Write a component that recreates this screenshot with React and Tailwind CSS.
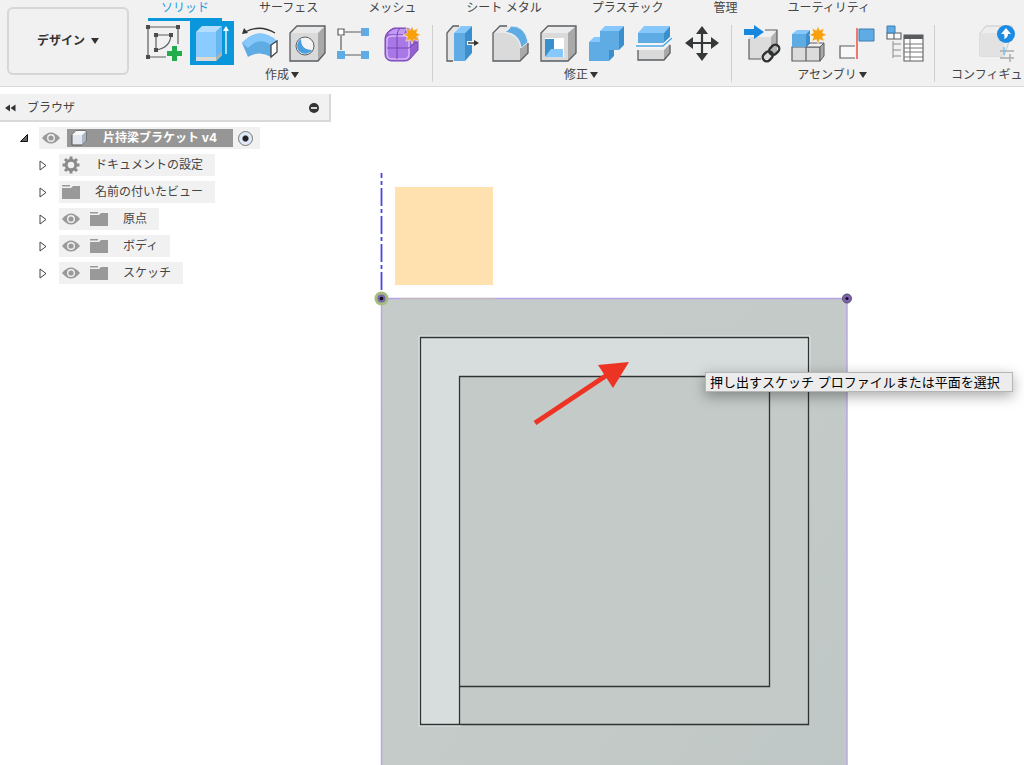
import { useState } from "react";

const TABS = [
  "ソリッド",
  "サーフェス",
  "メッシュ",
  "シート メタル",
  "プラスチック",
  "管理",
  "ユーティリティ",
];

const BLUE = "#5fabe3";
const LIGHT = "#86c8fb";
const DEEP = "#3c8fcd";
const LINE = "#5a5d60";

const Star = () => (
  <path
    d="M30 5l1.7 4.3 4.4-2-1.6 4.5 4.5 2.2-4.5 1.6 1.6 4.7-4.4-1.8L30 23l-1.7-4.5-4.4 1.8 1.6-4.7L21 14l4.5-2.2-1.6-4.5 4.4 2z"
    fill="#f9a10d"
    stroke="#f1f1f1"
    strokeWidth="0.6"
  />
);

const SketchIcon = () => (
  <>
    <path
      d="M6 6h30v17M6 6v30h18M14 29V14h15q-1 13-15 15"
      fill="none"
      stroke={LINE}
      strokeWidth="1.2"
    />
    <path
      d="M4 4h4v4H4zM34 4h4v4h-4zM4 34h4v4H4zM12 12h4v4h-4zM27 12h4v4h-4zM12 27h4v4h-4z"
      fill="#4b4e50"
    />
    <path d="M30 25h5v5h5v5h-5v5h-5v-5h-5v-5h5z" fill="#22ac4b" />
  </>
);

const ExtrudeIcon = () => (
  <>
    <path d="M6 36h20l6-6v4l-6 6H6z" fill="#dcdad6" />
    <path d="M26 36l6-6v4l-6 6z" fill="#b3b1ad" />
    <path d="M6 11h20v25H6z" fill="#8accff" />
    <path d="M6 11l6-6h20l-6 6z" fill="#b4deff" />
    <path d="M26 11l6-6v25l-6 6z" fill="#69b7f0" />
    <path d="M36 33V8" stroke="#fff" strokeWidth="1.3" />
    <path d="M36 5l3 5h-6z" fill="#fff" />
  </>
);

const RevolveIcon = () => (
  <>
    <path
      d="M7 11Q22 3 37 12"
      fill="none"
      stroke="#333"
      strokeWidth="1.3"
    />
    <path d="M4 13l2-6 4 5z" fill="#333" />
    <path d="M4 22Q21 4 39 20l-6 16q-11-7-23 0z" fill={BLUE} />
    <path d="M4 22Q21 4 39 20l-6 4Q21 15 10 27z" fill={LIGHT} />
    <path
      d="M33 24l6-4v11l-6 5z"
      fill="#fff"
      stroke="#444"
      strokeWidth="1.3"
    />
  </>
);

const HoleIcon = () => (
  <>
    <path d="M4 12l7-7h28v27l-7 8H4z" fill="#e9e9e9" />
    <path d="M4 12h28v28H4z" fill="#dadada" />
    <path d="M32 12l7-7v27l-7 8z" fill="#a9a9a9" />
    <path
      d="M4 12l7-7h28v27l-7 8H4z"
      fill="none"
      stroke={LINE}
      strokeWidth="1.3"
    />
    <circle cx="19" cy="25" r="9" fill="#f4f4f4" stroke={LINE} />
    <path d="M15 18a8 8 0 1 0 11 11q-11 0-11-11z" fill="#4a9fde" />
  </>
);

const PatternIcon = () => (
  <>
    <path
      d="M11 11h16M7 15v14M11 34h16"
      stroke={LINE}
      strokeWidth="1.2"
    />
    <path d="M4 8h6v6H4z" fill="#fff" stroke={LINE} strokeWidth="1.2" />
    <path d="M27 7h8v8h-8zM3 30h8v8H3zM27 30h8v8h-8z" fill={BLUE} />
  </>
);

const FormIcon = () => (
  <>
    <path
      d="M12 7h12q9 2 12 12v10l-8 9q-2 2-5 2H9q-6-1-6-7V17q1-7 9-10z"
      fill="#9461cf"
      stroke="#7545b3"
    />
    <path
      d="M5 18q1-3 5-3h13q4 0 4 3v15q0 5-5 5H10q-5 0-5-5z"
      fill="#a978e6"
      stroke="#d6b7fb"
      strokeWidth="1.6"
    />
    <path d="M6 13q4-5 9-5h9l-2 5z" fill="#c39af3" />
    <path
      d="M15 15v23M5 27h22M15 15q0-5 3-8M27 27l8-6"
      fill="none"
      stroke="#7545b3"
    />
    <Star />
  </>
);

const PressPullIcon = () => (
  <>
    <path d="M6 12l6-7h8l-7 7v28H6z" fill="#e4e4e4" />
    <path
      d="M12 40H6V12l6-7h6"
      fill="none"
      stroke={LINE}
      strokeWidth="1.3"
    />
    <path d="M13 12h11v28H13z" fill={BLUE} />
    <path d="M13 12l7-7h11l-7 7z" fill={LIGHT} />
    <path d="M24 12l7-7v27l-7 8z" fill={DEEP} />
    <path d="M26 22h9" stroke="#f4f4f4" strokeWidth="4" />
    <path d="M27 22h8" stroke="#333" strokeWidth="1.4" />
    <path d="M38 22l-5-3v6z" fill="#333" />
  </>
);

const FilletIcon = () => (
  <>
    <path d="M4 12l7-7h8l14 17 6-1v11l-8 8H4z" fill="#e9e9e9" />
    <path d="M4 12h11q15 2 16 14v14H4z" fill="#dadada" />
    <path d="M31 27l8-5v10l-8 8z" fill="#a9a9a9" />
    <path
      d="M18 5h-7l-7 7v28h27l8-8V22"
      fill="none"
      stroke={LINE}
      strokeWidth="1.3"
    />
    <path
      d="M16 11q4-2 6-6 14 0 17 16l-7 6q-1-14-16-16z"
      fill={BLUE}
      stroke="#f4f4f4"
      strokeWidth="0.8"
    />
  </>
);

const ShellIcon = () => (
  <>
    <path d="M4 12l7-7h28v27l-8 8H4z" fill="#ececec" />
    <path d="M4 12h27v28H4z" fill="#dadada" />
    <path d="M31 12l8-7v27l-8 8z" fill="#a9a9a9" />
    <path
      d="M4 12l7-7h28v27l-8 8H4z"
      fill="none"
      stroke={LINE}
      strokeWidth="1.3"
    />
    <path d="M8 17h19v19H8z" fill="#fff" />
    <path d="M8 18h9v10l-9 8z" fill={DEEP} />
    <path d="M8 36l6-8h12v8z" fill={LIGHT} />
  </>
);

const CombineIcon = () => (
  <>
    <path d="M15 10h19v19H15z" fill={BLUE} />
    <path d="M15 10l5-5h19l-5 5z" fill={LIGHT} />
    <path d="M34 10l5-5v19l-5 5z" fill={DEEP} />
    <path d="M4 21h20v19H4z" fill={BLUE} />
    <path d="M4 21l5-5h6v5z" fill={LIGHT} />
    <path d="M24 29h5v6l-5 5z" fill={DEEP} />
    <path d="M15 15h10v14H15z" fill={BLUE} />
  </>
);

const SplitIcon = () => (
  <>
    <path d="M5 12h26v10H5z" fill={BLUE} />
    <path d="M5 12l6-7h26l-6 7z" fill={LIGHT} />
    <path d="M31 12l6-7v11l-6 6z" fill={DEEP} />
    <path d="M5 29h26v10H5z" fill="#dadada" />
    <path d="M31 29l6-6v9l-6 7z" fill="#a9a9a9" />
    <path
      d="M5 29v10h26l6-7v-8"
      fill="none"
      stroke={LINE}
      strokeWidth="1.3"
    />
    <path d="M3 25h27l9-8" fill="none" stroke="#f8f8f8" strokeWidth="4" />
    <path d="M3 25h27l9-8" fill="none" stroke="#4fa8e8" strokeWidth="1.6" />
  </>
);

const MoveIcon = () => (
  <>
    <path d="M21 10v25M9 22h24" stroke="#353839" strokeWidth="2.2" />
    <path
      d="M21 5l6 8H15zM21 40l-6-8h12zM4 22l8-6v12zM38 22l-8 6V16z"
      fill="#353839"
    />
  </>
);

const InsertIcon = () => (
  <>
    <path d="M9 16h22v22H9z" fill="#dcdcdc" />
    <path d="M9 16l7-7h21l-6 7z" fill="#f0f0f0" />
    <path d="M31 16l6-7v21l-6 7z" fill="#b3b3b3" />
    <path
      d="M25 9h12v16M9 18v20h12"
      fill="none"
      stroke={LINE}
      strokeWidth="1.2"
    />
    <path d="M4 8h10V4l10 7-10 7v-4H4z" fill="#1788de" />
    <g
      transform="rotate(-45 31 32)"
      fill="none"
      stroke="#2e3132"
      strokeWidth="2.4"
    >
      <rect x="21" y="28" width="11" height="8" rx="4" />
      <rect x="30" y="28" width="11" height="8" rx="4" />
    </g>
  </>
);

const NewComponentIcon = () => (
  <>
    <path
      d="M4 26h14v14H4zM18 26h14v14H18z"
      fill="#dcdcdc"
      stroke={LINE}
      strokeWidth="1.2"
    />
    <path d="M18 26l4-4h14l-4 4z" fill="#f0f0f0" stroke={LINE} />
    <path d="M32 26l4-4v13l-4 5z" fill="#a9a9a9" stroke={LINE} />
    <path d="M4 13h14v13H4z" fill={BLUE} />
    <path d="M4 13l5-4h13l-4 4z" fill={LIGHT} />
    <path d="M18 13l4-4v13l-4 4z" fill={DEEP} />
    <Star />
  </>
);

const JointIcon = () => (
  <>
    <path d="M23 8h15v12H23z" fill={BLUE} stroke="#3f7fae" />
    <path
      d="M19 37H4V25h15"
      fill="#f8f8f8"
      stroke={LINE}
      strokeWidth="1.2"
    />
    <path d="M21 7v31" stroke="#e8504a" strokeWidth="1.5" />
  </>
);

const TableIcon = () => (
  <>
    <path
      d="M3 12h7v6H3zM10 12h7v6h-7z"
      fill="#f8f8f8"
      stroke={LINE}
      strokeWidth="1.1"
    />
    <path d="M3 5h8v7H3z" fill={BLUE} stroke="#3f7fae" />
    <path d="M9 20v17M9 23h8M9 29h8M9 35h8" stroke="#8a8c8e" />
    <path d="M20 14h19v26H20z" fill="#fff" stroke={LINE} strokeWidth="1.1" />
    <path d="M20 14h19v4H20z" fill={LINE} />
    <path d="M20 23h19M20 27h19M20 31h19M20 36h19M26 18v22" stroke="#777" />
  </>
);

const ConfigureIcon = () => (
  <>
    <path
      d="M5 12l6-7h26v7l-8 23H5z"
      fill="#ededed"
      stroke="#c9c9c9"
    />
    <path d="M5 12h24v23H5z" fill="#e2e2e2" />
    <path
      d="M25 30h14M25 37h14M35 33v8"
      stroke="#aaa"
      strokeWidth="1.5"
    />
    <path d="M29 26v8" stroke="#7cc0f2" strokeWidth="1.5" />
    <circle cx="31" cy="13" r="9" fill="#1b8be3" />
    <path d="M31 7l5 6h-3q0 4-4 5 1-2 0-5h-3z" fill="#fff" />
  </>
);

const GROUPS = [
  {
    label: "作成",
    tools: [
      ["スケッチを作成", SketchIcon],
      ["押し出し", ExtrudeIcon],
      ["回転", RevolveIcon],
      ["穴", HoleIcon],
      ["矩形状パターン", PatternIcon],
      ["フォームを作成", FormIcon],
    ],
  },
  {
    label: "修正",
    tools: [
      ["プレス/プル", PressPullIcon],
      ["フィレット", FilletIcon],
      ["シェル", ShellIcon],
      ["結合", CombineIcon],
      ["ボディを分割", SplitIcon],
      ["移動/コピー", MoveIcon],
    ],
  },
  {
    label: "アセンブリ",
    tools: [
      ["コンポーネントを挿入", InsertIcon],
      ["新規コンポーネント", NewComponentIcon],
      ["ジョイント", JointIcon],
      ["テーブル", TableIcon],
    ],
  },
];

const TREE = [
  { label: "ドキュメントの設定", icon: "gear" },
  { label: "名前の付いたビュー", icon: "folder" },
  { label: "原点", icon: "folder", eye: true },
  { label: "ボディ", icon: "folder", eye: true },
  { label: "スケッチ", icon: "folder", eye: true },
];

function Caret() {
  return (
    <svg className="h-2 w-2" viewBox="0 0 8 8" aria-hidden="true">
      <path d="M0 1h8L4 7z" fill="#333" />
    </svg>
  );
}

function ToolButton({ name, icon: Icon, active, onClick }) {
  return (
    <button
      type="button"
      aria-label={name}
      onClick={onClick}
      className={`size-11 shrink-0 ${active ? "bg-[#0996db]" : ""}`}
    >
      <svg className="size-11" viewBox="0 0 44 44" aria-hidden="true">
        <Icon />
      </svg>
    </button>
  );
}

function Eye() {
  return (
    <svg className="h-3 w-[18px] shrink-0" viewBox="0 0 18 12">
      <path d="M0 6Q9-5 18 6 9 17 0 6z" fill="#999" />
      <circle cx="9" cy="6" r="3.3" fill="none" stroke="#f1f1f1" strokeWidth="1.4" />
    </svg>
  );
}

function Folder() {
  return (
    <svg className="h-4 w-[18px] shrink-0" viewBox="0 0 18 16">
      <path d="M0 1h8v1.5H0zM0 4h9l2-2h7v13H0z" fill="#999" />
    </svg>
  );
}

function Gear() {
  return (
    <svg className="size-[18px] shrink-0" viewBox="-9 -9 18 18">
      <g stroke="#8a8a8a" strokeWidth="3">
        <path d="M0-8.500V-5M0 8.500V5M-8.500 0H-5M8.500 0H5M-6-6l2.500 2.500M6 6L3.500 3.500M-6 6l2.500-2.500M6-6L3.500-3.500" />
        <circle r="4.800" fill="none" />
      </g>
    </svg>
  );
}

function Browser() {
  return (
    <aside className="z-10 col-start-1 row-start-1 w-[331px] pt-[7px] text-xs text-[#444]">
      <div className="flex h-7 items-center border-r-2 border-b-2 border-[#d9d9d9] bg-[#f1f1f1] pt-0.5 pr-[10px] pl-[5px]">
        <button type="button" aria-label="折りたたむ">
          <svg className="h-2 w-[11px]" viewBox="0 0 11 8">
            <path d="M0 4l5-3.500v7zM5.500 4l5-3.500v7z" fill="#333" />
          </svg>
        </button>
        <h2 className="ml-[11px] flex-1">ブラウザ</h2>
        <button type="button" aria-label="閉じる">
          <svg className="size-[10px]" viewBox="0 0 10 10">
            <circle cx="5" cy="5" r="5" fill="#333" />
            <path d="M2 5h6" stroke="#fff" strokeWidth="1.6" />
          </svg>
        </button>
      </div>
      <ul className="mt-[5px] flex flex-col gap-[5px]">
        <li className="flex h-[22px] items-center pl-5">
          <svg className="mr-[11px] size-2" viewBox="0 0 8 8">
            <path d="M7.500.500v7h-7z" fill="#666" stroke="#111" />
          </svg>
          <div className="flex h-full items-center bg-[#f1f1f1] pr-[7px] pl-[3px]">
            <Eye />
            <div className="ml-[7px] flex h-[18px] w-[166px] items-center bg-[#969696] pl-1">
              <svg className="size-4" viewBox="0 0 16 16">
                <path
                  d="M1 5l4-4h10v10l-4 4H1z"
                  fill="#e2e6ef"
                  stroke="#555"
                  strokeLinejoin="round"
                />
                <path d="M11 5l4-4v10l-4 4z" fill="#adb6c6" />
                <path d="M1 5l4-4h10l-4 4z" fill="#f8f9fb" />
              </svg>
              <span className="ml-4 font-bold whitespace-nowrap text-white">
                片持梁ブラケット v4
              </span>
            </div>
            <input
              type="radio"
              name="component"
              aria-label="コンポーネントをアクティブ化"
              defaultChecked
              className="ml-[5px] size-[15px] appearance-none rounded-full border border-[#777] bg-radial from-[#222] from-25% to-[#dfe9f8] to-40%"
            />
          </div>
        </li>
        {TREE.map(({ label, icon, eye }) => (
          <li key={label} className="flex h-[22px] items-center pl-[39px]">
            <svg className="mr-3 h-[11px] w-2" viewBox="0 0 8 11">
              <path d="M1 1l6 4.500L1 10z" fill="#fff" stroke="#444" />
            </svg>
            <div className="flex h-full items-center bg-[#f1f1f1] pr-3 pl-[3px]">
              {eye && (
                <span className="mr-[10px] flex">
                  <Eye />
                </span>
              )}
              {icon === "gear" ? <Gear /> : <Folder />}
              <span className="ml-[15px] whitespace-nowrap">{label}</span>
            </div>
          </li>
        ))}
      </ul>
    </aside>
  );
}

function Viewport() {
  return (
    <svg className="col-start-1 row-start-1 h-full w-full" aria-hidden="true">
      <defs>
        <linearGradient id="plate" x1="0" y1="0" x2="1" y2="1">
          <stop offset="0" stopColor="#c4cbc9" />
          <stop offset="0.5" stopColor="#c3cac7" />
          <stop offset="1" stopColor="#bec6c6" />
        </linearGradient>
      </defs>
      <rect x="395" y="100" width="98" height="98" fill="#ffe1af" />
      <path
        d="M381.500 86v118"
        stroke="#4b46dc"
        strokeWidth="1.800"
        strokeDasharray="5 3 4 3 18 3 4 3 18 3 4 3 18 3 4 3 18 3"
      />
      <rect x="381" y="211" width="466" height="100%" fill="url(#plate)" />
      <path
        d="M381.500 900V211.500H847V900"
        fill="none"
        stroke="#b7a3e6"
        strokeWidth="1.400"
      />
      <path d="M400 211.500h95" stroke="#c3b8b4" />
      {/* profile under the cursor */}
      <path
        d="M420.500 250.500h388v39h-349v348h-39z"
        fill="#d6dddc"
        stroke="#dde3e1"
        strokeWidth="4"
      />
      <path d="M460 290h349v348H460z" fill="#c3cac8" />
      <path
        d="M420.500 250.500h388v387h-388zM459.500 637V289.500h310v310h-310"
        fill="none"
        stroke="#303334"
        strokeWidth="1.300"
      />
      <circle cx="381.500" cy="211.500" r="7" fill="#a4bd7b" />
      <circle cx="381.500" cy="211.500" r="4" fill="#7963ae" />
      <circle cx="381.500" cy="211.500" r="1.800" fill="#111" />
      <circle cx="847" cy="211.500" r="4.500" fill="#8260b8" stroke="#55515f" />
      <circle cx="847" cy="211.500" r="1.600" fill="#111" />
      <path d="M535 336l72-48" stroke="#ed3424" strokeWidth="5" />
      <path d="M629 275l-31 3 15 23z" fill="#ed3424" />
    </svg>
  );
}

function App() {
  const [tab, setTab] = useState("ソリッド");
  const [tool, setTool] = useState("押し出し");

  return (
    <div className="flex h-screen flex-col overflow-hidden bg-white font-['Inter','Noto_Sans_CJK_JP',sans-serif] text-[#444]">
      <header className="flex h-[87px] shrink-0 overflow-hidden border-b border-[#d9d9d9] bg-[#f1f1f1] text-xs">
        <button
          type="button"
          className="mt-[7px] ml-[7px] flex h-[68px] w-[122px] shrink-0 items-center justify-center gap-1.5 rounded-md border-2 border-[#d6d6d6] font-bold text-[#333]"
        >
          デザイン
          <Caret />
        </button>
        <div className="ml-[5px] min-w-0 flex-1">
          <nav className="flex gap-6 pl-3.5">
            {TABS.map((name) => (
              <button
                key={name}
                type="button"
                onClick={() => setTab(name)}
                className={`h-[21px] shrink-0 border-b-[3px] px-[13px] pb-0.5 leading-4 whitespace-nowrap ${
                  tab === name
                    ? "border-[#0996db] text-[#1e9be0]"
                    : "border-transparent"
                }`}
              >
                {name}
              </button>
            ))}
          </nav>
          <div className="flex">
            {GROUPS.map(({ label, tools }) => (
              <div key={label} className="flex shrink-0">
                <div className="flex flex-col items-center gap-0.5 pr-1.5 pl-2">
                  <div className="flex gap-1">
                    {tools.map(([name, icon]) => (
                      <ToolButton
                        key={name}
                        name={name}
                        icon={icon}
                        active={tool === name}
                        onClick={() => setTool(name)}
                      />
                    ))}
                  </div>
                  <button type="button" className="flex items-center gap-0.5 pr-1">
                    {label}
                    <Caret />
                  </button>
                </div>
                <div className="mt-1 h-[57px] w-px bg-[#d0d0d0]" />
              </div>
            ))}
            <div className="flex shrink-0 flex-col items-start gap-0.5 pl-4">
              <div className="flex pl-6">
                <ToolButton
                  name="モデルを設定"
                  icon={ConfigureIcon}
                  active={tool === "モデルを設定"}
                  onClick={() => setTool("モデルを設定")}
                />
              </div>
              <button type="button" className="whitespace-nowrap">
                コンフィギュ
              </button>
            </div>
          </div>
        </div>
      </header>
      <main className="relative grid min-h-0 flex-1 grid-cols-1 grid-rows-1">
        <Viewport />
        <Browser />
        <div
          role="tooltip"
          className="absolute top-[285px] left-[705px] z-20 border border-[#b5b5b5] bg-[#ececec] pr-3 pl-1 text-[13px] leading-[18px] whitespace-nowrap text-black shadow-[0_4px_14px_rgba(0,0,0,0.35)]"
        >
          押し出すスケッチ プロファイルまたは平面を選択
        </div>
      </main>
    </div>
  );
}

export default App;
